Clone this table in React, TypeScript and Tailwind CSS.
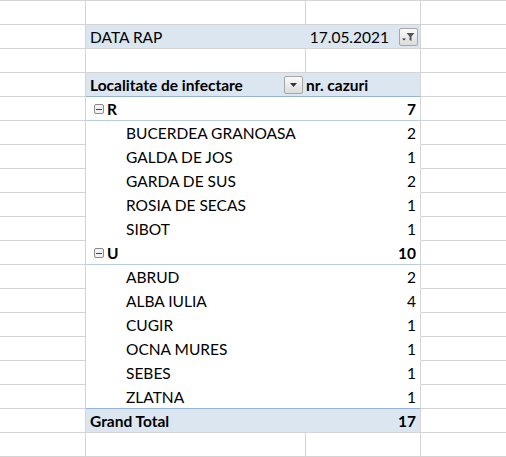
import React from 'react';

type Row =
  | { kind: 'empty' }
  | { kind: 'filter' }
  | { kind: 'header' }
  | { kind: 'group'; label: string; value: number }
  | { kind: 'item'; label: string; value: number; first: boolean }
  | { kind: 'total'; value: number };

const groups = [
  {
    label: 'R',
    items: [
      ['BUCERDEA GRANOASA', 2],
      ['GALDA DE JOS', 1],
      ['GARDA DE SUS', 2],
      ['ROSIA DE SECAS', 1],
      ['SIBOT', 1],
    ] as [string, number][],
  },
  {
    label: 'U',
    items: [
      ['ABRUD', 2],
      ['ALBA IULIA', 4],
      ['CUGIR', 1],
      ['OCNA MURES', 1],
      ['SEBES', 1],
      ['ZLATNA', 1],
    ] as [string, number][],
  },
];

const buildRows = (): Row[] => {
  const rows: Row[] = [{ kind: 'empty' }, { kind: 'filter' }, { kind: 'empty' }, { kind: 'header' }];
  let total = 0;
  groups.forEach(g => {
    const sum = g.items.reduce((a, [, v]) => a + v, 0);
    total += sum;
    rows.push({ kind: 'group', label: g.label, value: sum });
    g.items.forEach(([label, value], idx) => rows.push({ kind: 'item', label, value, first: idx === 0 }));
  });
  rows.push({ kind: 'total', value: total });
  rows.push({ kind: 'empty' });
  return rows;
};

const MinusBox = () => (
  <span className="mr-[3px] -mt-[2px] inline-flex h-[10px] w-[10px] items-center justify-center rounded-[2px] border border-[#8a8a8a] bg-[#f2f2f2]">
    <span className="h-px w-[6px] bg-[#444]" />
  </span>
);

const DropButton = () => (
  <span className="-mt-[2px] inline-flex h-[18px] w-[19px] items-center justify-center rounded-[2px] border border-[#a6a6a6] bg-gradient-to-b from-[#fafafa] to-[#dcdcdc]">
    <svg width="7" height="4" viewBox="0 0 7 4">
      <path d="M0 0h7L3.5 4z" fill="#333" />
    </svg>
  </span>
);

const FilterButton = () => (
  <span className="-mt-[2px] inline-flex h-[18px] w-[19px] items-center justify-center rounded-[2px] border border-[#a6a6a6] bg-gradient-to-b from-[#fafafa] to-[#dcdcdc]">
    <svg width="13" height="10" viewBox="0 0 13 10">
      <path d="M0 6.5h4L2 8.5z" fill="#333" />
      <path d="M4.5 1h8L9.5 4.5V9L7.5 8V4.5z" fill="#555" />
    </svg>
  </span>
);

// top border colour of the pivot cells for a given row
const pivotBorder = (row: Row) => {
  if (row.kind === 'total') return 'border-t-[#95b3d7]';
  if (row.kind === 'group') return row.label === 'R' ? 'border-t-[#95b3d7]' : 'border-t-white';
  if (row.kind === 'item') return row.first ? 'border-t-[#b8cce4]' : 'border-t-white';
  return 'border-t-[#d4d4d4]';
};

export default function App() {
  const rows = buildRows();

  return (
    <div className="h-[457px] w-[506px] overflow-hidden bg-white text-[15.5px] leading-none text-black [font-family:'Lato','Open_Sans',sans-serif]">
      {rows.map((row, i) => {
        const last = i === rows.length - 1;
        const blue = row.kind === 'filter' || row.kind === 'header' || row.kind === 'total';

        return (
          <div
            key={i}
            className={`grid grid-cols-[86px_220px_115px_85px] border-t border-t-[#d4d4d4] ${
              last ? 'h-[25px] border-b border-b-[#d4d4d4]' : 'h-6'
            }`}
          >
            <div className="border-r border-r-[#d4d4d4]" />
            {row.kind !== 'empty' ? (
              <div
                className={`col-span-2 -mt-px flex h-6 items-center border-t border-r border-r-[#d4d4d4] pt-[3px] ${pivotBorder(row)} ${
                  blue ? 'bg-[#dce6f1]' : 'bg-white'
                }`}
              >
                {row.kind === 'filter' && (
                  <>
                    <div className="w-[220px] pl-[4px]">DATA RAP</div>
                    <div className="flex flex-1 items-center justify-end gap-[10px] pr-[2px]">
                      <span>17.05.2021</span>
                      <FilterButton />
                    </div>
                  </>
                )}
                {row.kind === 'header' && (
                  <>
                    <div className="flex w-[220px] items-center justify-between pl-[4px] pr-[3px] font-bold">
                      <span>Localitate de infectare</span>
                      <DropButton />
                    </div>
                    <div className="flex-1 font-bold">nr. cazuri</div>
                  </>
                )}
                {row.kind === 'group' && (
                  <>
                    <div className="flex w-[220px] items-center pl-[8px] font-bold">
                      <MinusBox />
                      <span>{row.label}</span>
                    </div>
                    <div className="flex-1 pr-[4px] text-right font-bold">{row.value}</div>
                  </>
                )}
                {row.kind === 'item' && (
                  <>
                    <div className="w-[220px] pl-[40px]">{row.label}</div>
                    <div className="flex-1 pr-[4px] text-right">{row.value}</div>
                  </>
                )}
                {row.kind === 'total' && (
                  <>
                    <div className="w-[220px] pl-[4px] font-bold">Grand Total</div>
                    <div className="flex-1 pr-[4px] text-right font-bold">{row.value}</div>
                  </>
                )}
              </div>
            ) : (
              <>
                <div className="border-r border-r-[#d4d4d4]" />
                <div className="border-r border-r-[#d4d4d4]" />
              </>
            )}
            <div />
          </div>
        );
      })}
    </div>
  );
}
